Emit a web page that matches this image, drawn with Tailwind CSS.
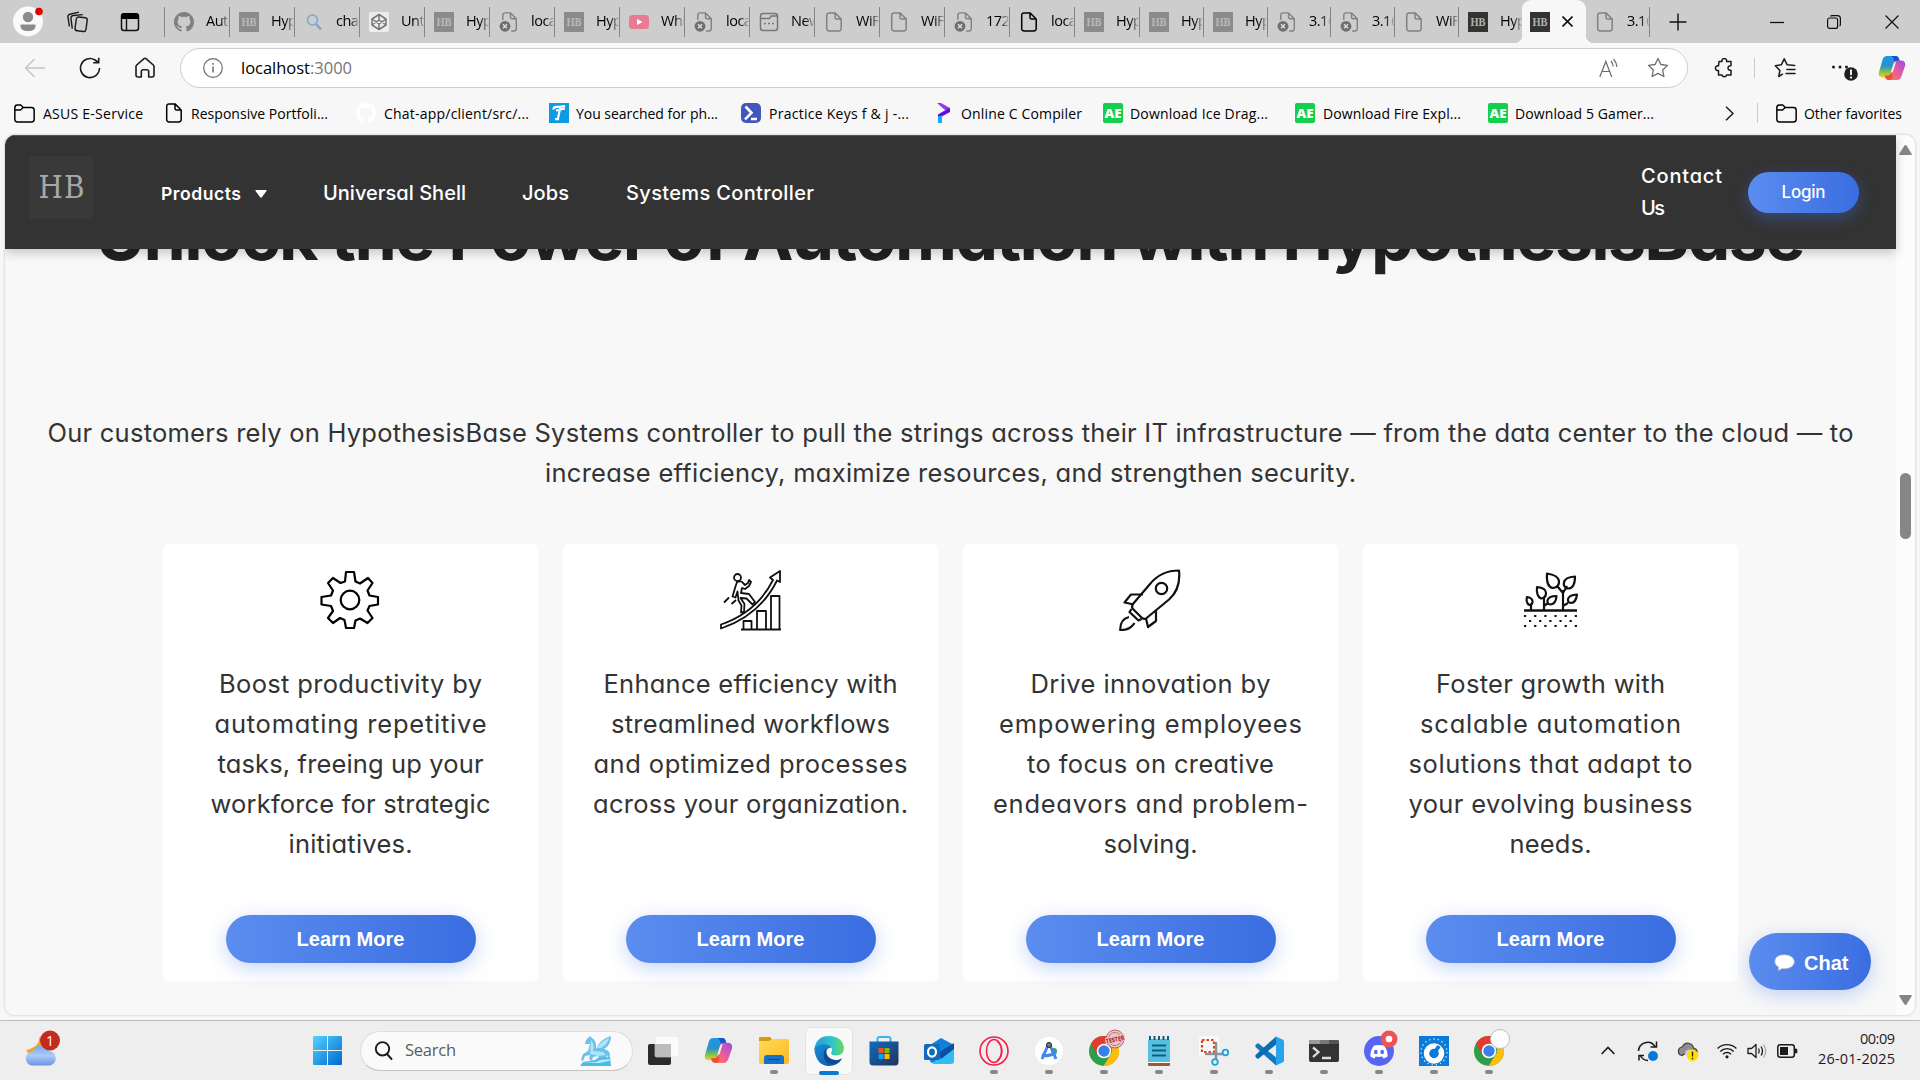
<!DOCTYPE html>
<html lang="en">
<head>
<meta charset="utf-8">
<title>HypothesisBase</title>
<script src="https://cdn.jsdelivr.net/npm/@tailwindcss/browser@4"></script>
</head>
<body class="w-[1920px] h-[1080px] overflow-hidden bg-[#f7f7f7] text-black font-['Open_Sans','Noto_Sans',sans-serif] flex flex-col">

<!-- Shared icon symbols -->
<svg class="absolute size-0">
  <defs>
    <linearGradient id="cpA" x1="0" y1="0" x2="0" y2="1"><stop offset="0" stop-color="#1a9be8"/><stop offset=".45" stop-color="#2b8fd0"/><stop offset=".7" stop-color="#6fbf5a"/><stop offset="1" stop-color="#f7d21e"/></linearGradient>
    <linearGradient id="cpB" x1="1" y1="0" x2="0" y2="1"><stop offset="0" stop-color="#9b4be8"/><stop offset=".5" stop-color="#ec5b9a"/><stop offset="1" stop-color="#fb8a4a"/></linearGradient>
    <linearGradient id="edA" x1="0" y1="0" x2="1" y2="0"><stop offset="0" stop-color="#1f9be0"/><stop offset=".6" stop-color="#33c4c8"/><stop offset="1" stop-color="#63dc58"/></linearGradient>
    <linearGradient id="edB" x1="0" y1="0" x2="1" y2="1"><stop offset="0" stop-color="#1e90dc"/><stop offset="1" stop-color="#0b4f9e"/></linearGradient>
    <linearGradient id="win" x1="0" y1="0" x2="1" y2="1"><stop offset="0" stop-color="#55d4fd"/><stop offset="1" stop-color="#0067cf"/></linearGradient>
    <linearGradient id="store" x1="0" y1="0" x2="1" y2="1"><stop offset="0" stop-color="#0f6cc0"/><stop offset="1" stop-color="#22335e"/></linearGradient>
    <linearGradient id="fold" x1="0" y1="0" x2="1" y2="1"><stop offset="0" stop-color="#ffdb5c"/><stop offset="1" stop-color="#fbb91f"/></linearGradient>
    <linearGradient id="cloud" x1="0" y1="0" x2="0" y2="1"><stop offset="0" stop-color="#7fa5ee"/><stop offset=".5" stop-color="#a9ccf8"/><stop offset="1" stop-color="#6f93e4"/></linearGradient>
  </defs>
  <symbol id="github" viewBox="0 0 16 16"><path fill="currentColor" d="M8 0C3.58 0 0 3.58 0 8c0 3.54 2.29 6.53 5.47 7.59.4.07.55-.17.55-.38 0-.19-.01-.82-.01-1.49-2.01.37-2.53-.49-2.69-.94-.09-.23-.48-.94-.82-1.13-.28-.15-.68-.52-.01-.53.63-.01 1.08.58 1.23.82.72 1.21 1.87.87 2.33.66.07-.52.28-.87.51-1.07-1.78-.2-3.64-.89-3.64-3.95 0-.87.31-1.59.82-2.15-.08-.2-.36-1.02.08-2.12 0 0 .67-.21 2.2.82.64-.18 1.32-.27 2-.27s1.36.09 2 .27c1.53-1.04 2.2-.82 2.2-.82.44 1.1.16 1.92.08 2.12.51.56.82 1.27.82 2.15 0 3.07-1.87 3.75-3.65 3.95.29.25.54.73.54 1.48 0 1.07-.01 1.93-.01 2.2 0 .21.15.46.55.38A8.01 8.01 0 0 0 16 8c0-4.42-3.58-8-8-8z"/></symbol>
  <symbol id="file" viewBox="0 0 20 20"><path fill="none" stroke="currentColor" stroke-width="1.5" stroke-linejoin="round" d="M5 .9h6L17.2 7v9.6a2.3 2.3 0 0 1-2.3 2.4H5a2.3 2.3 0 0 1-2.3-2.4V3.2A2.3 2.3 0 0 1 5 .9zM11 1v4.4A1.6 1.6 0 0 0 12.6 7h4.4"/></symbol>
  <symbol id="filex" viewBox="0 0 20 20"><path fill="none" stroke="#808080" stroke-width="1.4" stroke-linejoin="round" d="M3.8 8V3A2.1 2.1 0 0 1 6 .9h5.500L17.300 6.800v10a2.100 2.100 0 0 1-2.100 2.200h-3M11.500 1v4.300A1.500 1.500 0 0 0 13 6.800h4"/><circle cx="6" cy="14.300" r="5.400" fill="#6f6f6f"/><path d="M4 12.300l4 4m0-4l-4 4" stroke="#ddd" stroke-width="1.500"/></symbol>
  <symbol id="hb" viewBox="0 0 20 20"><rect width="20" height="20" fill="#8b8b8b"/><text x="10" y="14.200" text-anchor="middle" font-family="Liberation Serif" font-size="11.500" font-weight="700" fill="#b9b9b9" textLength="15" lengthAdjust="spacingAndGlyphs">HB</text></symbol>
  <symbol id="hbd" viewBox="0 0 20 20"><rect width="20" height="20" fill="#333"/><text x="10" y="14.200" text-anchor="middle" font-family="Liberation Serif" font-size="11.500" font-weight="700" fill="#b0b0b0" textLength="15" lengthAdjust="spacingAndGlyphs">HB</text></symbol>
  <symbol id="folder" viewBox="0 0 20 20"><path fill="none" stroke="currentColor" stroke-width="1.400" stroke-linejoin="round" d="M.8 4.500A2.500 2.500 0 0 1 3.300 2h3.200l2.300 2.300h7.900a2.500 2.500 0 0 1 2.500 2.500v8.700a2.500 2.500 0 0 1-2.500 2.500H3.300a2.500 2.500 0 0 1-2.500-2.500zM.8 6.600h5.400l2.600-2.300"/></symbol>
  <symbol id="ae" viewBox="0 0 20 20"><rect width="20" height="20" rx="2" fill="#13d04c"/><text x="10" y="14.600" text-anchor="middle" font-family="Open Sans" font-size="12.500" font-weight="800" fill="#fff" textLength="17" lengthAdjust="spacingAndGlyphs">AE</text></symbol>
  <symbol id="copilot" viewBox="0 0 28 28"><path fill="url(#cpA)" d="M9 2h8.500c2 0 3 1 3.500 3l.8 2.800h-2.600c-2 0-3 1-3.600 3L12.800 20c-.5 2-1.500 3.500-4 3.500H5C1.500 23.500.2 21 1 18L4.500 6C5.300 3.300 6.500 2 9 2z"/><path fill="#1755c8" d="M11.500 2h6c2 0 3 1 3.500 3l.8 2.800h-3c-3 0-2.800-2-3.800-4-.6-1.200-1.800-1.800-3.500-1.800z"/><path fill="url(#cpB)" d="M19 26h-8.500c-2 0-3-1-3.500-3l-.3-1.500h2.500c2 0 3-1 3.600-3l2.700-9.200C16 7.300 17 6.500 19.300 6.500H23c3.500 0 4.800 2.500 4 5.500L23.500 22c-.8 2.700-2 4-4.500 4z"/><path fill="#f04f36" d="M7 21.500h3c2 0 3-1 3.500-3l1 2c.6 2.500-.2 5.500-2.500 5.500-3.500 0-4.600-1.500-5-4.500z"/><path fill="#eee" d="M13.300 16.500l2-6.500c.4-1.400 1.200-2.200 2.700-2.200l-2.500 8.400c-.4 1.400-1.200 2.300-2.700 2.300z"/></symbol>
  <symbol id="chrome" viewBox="0 0 30 30"><circle cx="15" cy="15" r="15" fill="#2e9e48"/><path fill="#e33b2e" d="M2 7.500A15 15 0 0 1 28 7.500H15L8.500 19z"/><path fill="#fdbd0b" d="M28 7.500A15 15 0 0 1 14.500 30L21.500 18.800A7.500 7.500 0 0 0 20 8z"/><circle cx="15" cy="15" r="7.300" fill="#fff"/><circle cx="15" cy="15" r="5.700" fill="#3b7fe8"/></symbol>
</svg>

<!-- Tab strip -->
<div class="h-[43px] shrink-0 bg-[#cdcdcd] flex items-center text-[14.5px] leading-5">
  <div class="w-[164px] shrink-0 flex items-center">
    <svg class="ml-[13px] size-[31px]" viewBox="0 0 31 31"><circle cx="15" cy="15.500" r="15" fill="#fafafa"/><circle cx="15" cy="11" r="5.200" fill="#8b8b8b"/><path fill="#8b8b8b" d="M7.500 18.500h15v1.500a5.500 5 0 0 1-5.500 5h-4a5.500 5 0 0 1-5.500-5z"/><circle cx="26" cy="5.500" r="3.800" fill="#e30000"/></svg>
    <svg class="ml-[23px] size-[22px]" viewBox="0 0 23 23" fill="none" stroke="#1b1b1b" stroke-width="1.500" stroke-linejoin="round"><rect x="9" y="6.500" width="11.500" height="14.500" rx="2.500" transform="rotate(8 14 14)"/><path d="M5.500 18.500L4.200 8A2.700 2.700 0 0 1 6.700 4.700L16.500 3.800M2.500 16L1 6.500A2.600 2.600 0 0 1 3 3.400L12.500 1.200"/></svg>
    <svg class="ml-[31px] size-5" viewBox="0 0 20 20"><rect x="1.500" y="2" width="17" height="16.500" rx="2.500" fill="none" stroke="#111" stroke-width="1.500"/><path d="M1 7V4a3 3 0 0 1 3-3h12a3 3 0 0 1 3 3v3z"/><path d="M6.500 7v11" stroke="#111" stroke-width="1.400"/></svg>
  </div>
  <div id="tabs" class="flex items-center"></div>
  <svg class="ml-[19px] size-[18px]" viewBox="0 0 18 18" stroke="#111" stroke-width="1.400"><path d="M9 .5v17M.5 9h17"/></svg>
  <svg class="ml-[83px] w-[14px] h-3" viewBox="0 0 14 12" stroke="#111" stroke-width="1.300"><path d="M0 6.500h14"/></svg>
  <svg class="ml-[43px] size-[14px]" viewBox="0 0 14 14" fill="none" stroke="#111" stroke-width="1.200"><rect x=".6" y="3" width="10" height="10.400" rx="2"/><path d="M3.500 1.400Q4 .6 5 .6h5.500a2.900 2.900 0 0 1 2.900 2.900V9.500q0 1-.9 1.500"/></svg>
  <svg class="ml-[44px] size-[14px]" viewBox="0 0 14 14" stroke="#111" stroke-width="1.200"><path d="M.5.5l13 13m0-13l-13 13"/></svg>
</div>

<!-- Address row -->
<div class="h-[50px] shrink-0 flex items-center">
  <svg class="ml-[24px] size-[22px]" viewBox="0 0 22 22" fill="none" stroke="#c4c4c4" stroke-width="1.400"><path d="M21 11H1.500M10.500 2L1.500 11l9 9"/></svg>
  <svg class="ml-[33px] size-[22px]" viewBox="0 0 22 22" fill="none" stroke="#1b1b1b" stroke-width="1.600"><path d="M20.500 11A9.500 9.500 0 1 1 16 3l3.500 2.500M19.700.8v5h-5.500"/></svg>
  <svg class="ml-[33px] size-[22px]" viewBox="0 0 22 22" fill="none" stroke="#1b1b1b" stroke-width="1.600" stroke-linejoin="round"><path d="M2 9.500Q2 8.700 2.700 8L10 1.600q1-.8 2 0L19.300 8q.7.700.7 1.500V18a2 2 0 0 1-2 2h-3.300v-5.500a1.700 1.700 0 0 0-1.700-1.700h-4a1.700 1.700 0 0 0-1.700 1.700V20H4a2 2 0 0 1-2-2z"/></svg>
  <div class="ml-[24px] w-[1508px] h-10 rounded-full bg-white border border-[#cfcfcf] flex items-center">
    <svg class="ml-[22px] size-5" viewBox="0 0 20 20" fill="none" stroke="#6b6b6b" stroke-width="1.200"><circle cx="10" cy="10" r="9.300"/><path d="M10 8.500v6M10 5v1.700" stroke-width="1.500"/></svg>
    <span class="ml-[18px] text-[16.5px] text-[#767676] whitespace-nowrap" data-w="111"><span class="text-black">localhost</span>:3000</span>
    <svg class="ml-auto w-[20px] h-[20px]" viewBox="0 0 20 20" fill="none" stroke="#6b6b6b" stroke-width="1.200"><path d="M.8 19L6.800 3.500 12.800 19M2.900 13.500h7.800M12 3a9 9 0 0 1 2.200 5.500M14.500 1a13 13 0 0 1 3.500 8"/></svg>
    <svg class="ml-[28px] mr-[18px] size-[22px]" viewBox="0 0 22 22" fill="none" stroke="#6b6b6b" stroke-width="1.300" stroke-linejoin="round"><path d="M11 1.500l2.900 6 6.600.9-4.800 4.600 1.200 6.500L11 16.400l-5.900 3.100L6.300 13 1.500 8.400l6.600-.9z"/></svg>
  </div>
  <svg class="ml-[26px] size-5" viewBox="0 0 20 20" fill="none" stroke="#1b1b1b" stroke-width="1.500" stroke-linejoin="round"><path d="M5 3.500h3a2.400 2.400 0 1 1 4.600 0H17v4.300a2.300 2.300 0 1 0 0 4.400V17h-4.400a2.400 2.400 0 0 1-4.600 0H4.500v-4.500a2.400 2.400 0 1 1 0-4.600z"/></svg>
  <div class="ml-[20px] w-px h-5 bg-[#cbcbcb]"></div>
  <svg class="ml-[19px] size-[22px]" viewBox="0 0 22 22" fill="none" stroke="#1b1b1b" stroke-width="1.500" stroke-linejoin="round" stroke-linecap="round"><path d="M8.500 17.200L4.800 19.500 5.900 13.500 1.300 8.800l6-1 2.900-6 3 6 7.500.6M13 12.500h8M12 16.500h9"/></svg>
  <svg class="ml-[35px] w-[27px] h-[28px]" viewBox="0 0 27 28"><g fill="#1b1b1b"><circle cx="2.500" cy="13" r="1.500"/><circle cx="9" cy="13" r="1.500"/><circle cx="15.500" cy="13" r="1.500"/></g><circle cx="20" cy="20" r="6.800" fill="#1f1f1f"/><path d="M20 15.500v5.500M20 22.500v2" stroke="#fff" stroke-width="1.800"/></svg>
  <svg class="ml-[20px] size-[28px]"><use href="#copilot"/></svg>
</div>

<!-- Bookmarks bar -->
<div class="h-[42px] shrink-0 flex items-center text-[14px] whitespace-nowrap pb-0.5">
  <div class="ml-[14px] w-[150px] flex items-center gap-2"><svg class="size-[21px]"><use href="#folder"/></svg><span data-w="100">ASUS E-Service</span></div>
  <div class="w-[191px] flex items-center gap-[7px]"><svg class="size-5"><use href="#file"/></svg><span data-w="137">Responsive Portfoli...</span></div>
  <div class="w-[194px] flex items-center gap-2 pl-px"><svg class="size-5 text-white"><use href="#github"/></svg><span data-w="145">Chat-app/client/src/...</span></div>
  <div class="w-[191px] flex items-center gap-[7px]"><svg class="size-5" viewBox="0 0 20 20"><rect width="20" height="20" fill="#0c9be4"/><path d="M4 6.500Q5 3.500 8 3.800T16 3.200M11.500 4Q9.500 12 9 16M6 16.200h4M7 7.500l9-2" stroke="#fff" stroke-width="2.200" fill="none"/></svg><span data-w="142">You searched for ph...</span></div>
  <div class="w-[194px] flex items-center gap-2 pl-px"><svg class="size-5" viewBox="0 0 20 20"><rect width="20" height="20" rx="5" fill="#4355be"/><path d="M4.500 3.500l6 6.300-6.500 6.500M10 16h6" stroke="#fff" stroke-width="2.600" fill="none"/></svg><span data-w="140">Practice Keys f &amp; j -...</span></div>
  <div class="w-[169px] flex items-center gap-[7px]"><svg class="size-5" viewBox="0 0 20 20"><path fill="#8f3cf5" d="M3 0h4l9 5v4l-4-1z"/><path fill="#5b12d8" d="M16 5v4L4 15.500v-4l5-3z"/><path fill="#19a8ff" d="M4 13.500l4-1V20H4z"/></svg><span data-w="121">Online C Compiler</span></div>
  <div class="w-[192px] flex items-center gap-[7px]"><svg class="size-5"><use href="#ae"/></svg><span data-w="138">Download Ice Drag...</span></div>
  <div class="w-[193px] flex items-center gap-2"><svg class="size-5"><use href="#ae"/></svg><span data-w="138">Download Fire Expl...</span></div>
  <div class="w-[237px] flex items-center gap-[7px]"><svg class="size-5"><use href="#ae"/></svg><span data-w="139">Download 5 Gamer...</span></div>
  <svg class="w-[9px] h-[15px]" viewBox="0 0 9 15" fill="none" stroke="#1b1b1b" stroke-width="1.500"><path d="M1 .8l7 6.700-7 6.700"/></svg>
  <div class="ml-[23px] w-px h-5 bg-[#cbcbcb]"></div>
  <div class="ml-[18px] flex items-center gap-[7px]"><svg class="size-[21px]"><use href="#folder"/></svg><span data-w="98">Other favorites</span></div>
</div>

<!-- Page viewport -->
<div class="mx-[5px] h-[880px] shrink-0 flex rounded-[10px] overflow-hidden bg-[#fcfcfc] shadow-[0_0_2px_1px_#dcdcdc] relative">
  <div class="w-[1891px] bg-[#f8f8f8] flex flex-col font-[Inter,sans-serif] [font-feature-settings:'cv11'] [font-optical-sizing:none] [font-variation-settings:'opsz'_14]">
    <header class="h-[114px] shrink-0 bg-[#333] border-t border-[#555] shadow-[0_4px_10px_rgba(0,0,0,0.2)] z-10 flex items-center text-white text-[20px] font-medium whitespace-nowrap">
      <div class="ml-[25px] mt-[-10px] size-[63px] bg-[#393939] flex items-center justify-center font-['DejaVu_Serif_Condensed','DejaVu_Serif',serif] text-[31px] text-[#a8a8a8] font-normal"><span data-w="46">HB</span></div>
      <div class="ml-[68px] mt-[3px] flex items-center text-[17.6px] font-semibold"><span data-w="80">Products</span><svg class="ml-[14px] w-3 h-2" viewBox="0 0 12 8"><path fill="#fff" d="M1 0h10q1 0 .5 1L6.600 7.500q-.6.700-1.200 0L.500 1Q0 0 1 0z"/></svg></div>
      <span class="ml-[56px]" data-w="143">Universal Shell</span>
      <span class="ml-[56px]" data-w="47">Jobs</span>
      <span class="ml-[57px]" data-w="188">Systems Controller</span>
      <div class="ml-auto mr-[26px] mt-[-1px] leading-8 flex flex-col items-start"><span data-w="81">Contact</span><span data-w="24">Us</span></div>
      <button class="mr-[37px] w-[111px] h-[41px] rounded-full bg-linear-to-r from-[#5b8def] to-[#3a6de0] shadow-[0_5px_15px_rgba(59,111,224,0.4)] text-[17px] font-medium flex items-center justify-center"><span data-w="44">Login</span></button>
    </header>
    <h1 class="mt-[-59px] h-[90px] shrink-0 leading-[90px] text-[68px] font-bold text-[#222] flex justify-center whitespace-nowrap"><span data-w="1710">Unlock the Power of Automation with HypothesisBase</span></h1>
    <p class="mt-[133px] text-[25.5px] leading-10 text-[#333] flex flex-col items-center whitespace-nowrap"><span data-w="1806">Our customers rely on HypothesisBase Systems controller to pull the strings across their IT infrastructure — from the data center to the cloud — to</span><span data-w="811">increase efficiency, maximize resources, and strengthen security.</span></p>
    <div class="mt-[51px] flex justify-center gap-[25px] text-[25.5px] leading-10 text-[#333] whitespace-nowrap">
      <section class="w-[375px] h-[437px] rounded-[5px] bg-white pt-[25px] pb-[18px] flex flex-col items-center">
        <svg class="size-[62px] shrink-0 mr-0.5" viewBox="0 0 62 62" fill="none" stroke="#000" stroke-width="2.200" stroke-linejoin="round"><path d="M27 3h8l1.500 9.500 4.500 2L49 9l4.500 5-5 7.500 2 5L59 28v7.500L50.500 37l-2 4.500 5 7.500-5 5L41 49.500l-4.500 2L35 59h-8l-1.500-8-4.500-2L14 54l-5-5 5-7-2-5-9.500-1.500V28L12 26.500l2-5L9 14l5-5 7.500 5 4.500-1.500z"/><circle cx="31" cy="31" r="9.300"/></svg>
        <div class="mt-[33px] flex flex-col items-center"><span data-w="263">Boost productivity by</span><span data-w="272">automating repetitive</span><span data-w="266">tasks, freeing up your</span><span data-w="280">workforce for strategic</span><span data-w="124">initiatives.</span></div>
        <button class="mt-auto w-[250px] h-12 shrink-0 rounded-full bg-linear-to-r from-[#5b8def] to-[#3a6de0] shadow-[0_5px_20px_rgba(59,111,224,0.3)] text-white font-bold text-[20px] font-['Liberation_Sans',Arial,sans-serif]">Learn More</button>
      </section>
      <section class="w-[375px] h-[437px] rounded-[5px] bg-white pt-[25px] pb-[18px] flex flex-col items-center">
        <svg class="size-[62px] shrink-0" viewBox="0 0 62 62" fill="none" stroke="#111" stroke-width="1.800" stroke-linejoin="round"><path d="M1 55.500Q37 43 53 11l-3-2.500L60 2v11l-3-1.500Q40 46 1 59.500z"/><path d="M21 60.500h40M23.500 60v-8h8v8M37 60V42h9v18M51 60V27h8.500v33"/><circle cx="17.500" cy="8.500" r="3.500"/><path d="M17 13q5-1.500 6 1l2 2 3-2 1-3 2 2-2 4-4 3-3-1-1 5 8 1 6 8-2.500 2.500-6-6-6-.5 4 6-.5 8-3 .5.500-7-3-5-1-9-2 6-3-1 3-10z"/><path d="M4 33.500l5-5M11.500 35l4.500-4"/></svg>
        <div class="mt-[33px] flex flex-col items-center"><span data-w="294">Enhance efficiency with</span><span data-w="279">streamlined workflows</span><span data-w="314">and optimized processes</span><span data-w="315">across your organization.</span></div>
        <button class="mt-auto w-[250px] h-12 shrink-0 rounded-full bg-linear-to-r from-[#5b8def] to-[#3a6de0] shadow-[0_5px_20px_rgba(59,111,224,0.3)] text-white font-bold text-[20px] font-['Liberation_Sans',Arial,sans-serif]">Learn More</button>
      </section>
      <section class="w-[375px] h-[437px] rounded-[5px] bg-white pt-[25px] pb-[18px] flex flex-col items-center">
        <svg class="size-[62px] shrink-0 mr-0.5" viewBox="0 0 62 62" fill="none" stroke="#111" stroke-width="2.200" stroke-linejoin="round"><path d="M60 1.500Q62 20 50 30.500L27 49.500q-3 1-4.500-1L14 40q-1.500-2-.5-4.500L31 15Q42 1.500 60 1.500z"/><circle cx="42.500" cy="19.500" r="5.700"/><path d="M24 25.500H12L5.500 33.500l9.500 2M37 41v11l-8 6-2-8.500M12.500 40l-2 3 9 8.500 3-1.500M10 48Q1 50 1.200 61 11 61.500 15.500 54"/></svg>
        <div class="mt-[33px] flex flex-col items-center"><span data-w="240">Drive innovation by</span><span data-w="303">empowering employees</span><span data-w="247">to focus on creative</span><span data-w="315">endeavors and problem-</span><span data-w="94">solving.</span></div>
        <button class="mt-auto w-[250px] h-12 shrink-0 rounded-full bg-linear-to-r from-[#5b8def] to-[#3a6de0] shadow-[0_5px_20px_rgba(59,111,224,0.3)] text-white font-bold text-[20px] font-['Liberation_Sans',Arial,sans-serif]">Learn More</button>
      </section>
      <section class="w-[375px] h-[437px] rounded-[5px] bg-white pt-[25px] pb-[18px] flex flex-col items-center">
        <svg class="size-[62px] shrink-0 mr-0.5" viewBox="0 0 62 62" fill="none" stroke="#111" stroke-width="2.200" stroke-linejoin="round"><path d="M5 41.500h53" stroke-width="2.400"/><path d="M44 41V21M44 24l-5-6M44 24l4-7M44 37l5-3M25 41V28M25 37l4-3M12 41v-6M28 4.500Q39 6 40 12q.5 6-6 7Q27 18 28 4.500zM56 7.500q0 12-7 12-5-1-4-6Q46 8 56 7.500zM58 25.500q-1 8-6 8.500-3.500-.5-3-4 1-4 9-4.500zM18 18q9 1 9 6 0 5-5 5.500Q17 27 18 18zM37.500 27q-.5 8-6 8.500-3.500-.5-3-4 1-4.500 9-4.500zM8 28q6 1 5.500 5-.5 3-3 3Q6.500 34 8 28z"/><path d="M5 47h53M5 57h53" stroke-width="2.200" stroke-dasharray="2.200 7.950"/><path d="M10 52h45" stroke-width="2.200" stroke-dasharray="2.200 7.950"/></svg>
        <div class="mt-[33px] flex flex-col items-center"><span data-w="229">Foster growth with</span><span data-w="261">scalable automation</span><span data-w="284">solutions that adapt to</span><span data-w="284">your evolving business</span><span data-w="82">needs.</span></div>
        <button class="mt-auto w-[250px] h-12 shrink-0 rounded-full bg-linear-to-r from-[#5b8def] to-[#3a6de0] shadow-[0_5px_20px_rgba(59,111,224,0.3)] text-white font-bold text-[20px] font-['Liberation_Sans',Arial,sans-serif]">Learn More</button>
      </section>
    </div>
  </div>
  <!-- Scrollbar -->
  <div class="w-[19px] flex flex-col items-center py-[10px] bg-[#fcfcfc]">
    <svg class="w-[13px] h-[10px]" viewBox="0 0 13 10"><path fill="#858585" d="M6.500 0q.7 0 1.200.8L12.800 9q.3 1-.8 1H1Q0 10 .2 9L5.300.8Q5.800 0 6.500 0z"/></svg>
    <div class="mt-[318px] w-[11px] h-[66px] rounded-full bg-[#868686]"></div>
    <svg class="mt-auto w-[13px] h-[10px]" viewBox="0 0 13 10"><path fill="#858585" d="M6.500 10q-.7 0-1.200-.8L.2 1Q0 0 1 0h11q1 0 .8 1L7.700 9.200q-.5.800-1.200.8z"/></svg>
  </div>
  <!-- Floating chat button -->
  <button class="absolute right-[44px] bottom-[25px] w-[122px] h-[57px] rounded-full bg-linear-to-r from-[#5b8def] to-[#3a6de0] shadow-[0_5px_20px_rgba(59,111,224,0.3)] text-white font-bold text-[20px] font-['Liberation_Sans',Arial,sans-serif] flex items-center pl-[25px] gap-[9px] pt-0.5"><svg class="w-[21px] h-[17px]" viewBox="0 0 21 17"><path fill="#fff" stroke="#b9b9b9" stroke-width=".8" d="M10.500.8C16 .8 20.300 3.800 20.300 7.800s-4.300 6.900-9.800 6.900q-1.200 0-2.300-.2L4.300 16.500l.3-3.400Q.8 11 .8 7.800.8.800 10.500.8z"/></svg>Chat</button>
</div>

<!-- Taskbar -->
<div class="mt-[5px] h-[60px] shrink-0 bg-[#eeeeee] border-t border-[#bcbcbc] flex items-center">
  <svg class="ml-[25px] w-[36px] h-[38px] mt-[-6px]" viewBox="0 0 36 38"><path fill="#f2a51f" d="M14 8q1 10-13 13 4 8 14 6l6-12z"/><path fill="url(#cloud)" d="M8 36.500a7 7 0 0 1-.5-14 9 9 0 0 1 16.500-.5 7.300 7.300 0 0 1 .5 14.500z"/><circle cx="25" cy="11.500" r="10" fill="#c42b1c"/><text x="25" y="16.500" text-anchor="middle" font-size="14" fill="#fff">1</text></svg>
  <svg class="ml-[252px] size-[29px]" viewBox="0 0 29 29"><path fill="url(#win)" d="M1 0h13v14H0V1q0-1 1-1zM15 0h13q1 0 1 1v13H15zM0 15h14v14H1q-1 0-1-1zM15 15h14v13q0 1-1 1H15z"/></svg>
  <div class="ml-[18px] w-[273px] h-10 rounded-full bg-[#fafafa] border border-[#dedede] border-b-[#c4c4c4] flex items-center">
    <svg class="ml-[13px] size-[19px]" viewBox="0 0 19 19" fill="none" stroke="#1b1b1b" stroke-width="1.900" stroke-linecap="round"><circle cx="8.500" cy="7.800" r="6.700"/><path d="M13 13l4.500 5"/></svg>
    <span class="ml-[12px] text-[16.500px] text-[#5c5c5c]" data-w="51">Search</span>
    <svg class="ml-auto mr-[20px] w-[32px] h-[32px]" viewBox="0 0 32 32"><path fill="#6fc0e8" d="M16 14Q20 4 31 1q0 9-7 13 5 1 6 5l-1 5-2-4-2 6h-5l-2-5-5 1-1 4-3-2 1-4-5 1-2 5-2-1 2-6 5-3Q9 13 10 9L5 9 6 5 10 1l2 2q5 3 4 11z"/><path fill="#a8e6fa" d="M17 13Q21 6 29 3q-1 6-8 10zM11 5q4 4 2 11l10 1 3 3-8 1-8-2z"/><path fill="#48bce6" d="M0 31l3-4 12-2 3-2 12-1 1 9z"/><path fill="#b4effc" d="M3 28l13-1 4-2 10-1-1 2-10 2z"/></svg>
  </div>
  <div class="ml-[3px] flex items-center h-full">
    <div class="w-[55px] flex justify-center"><svg class="w-[31px] h-[30px]" viewBox="0 0 31 30"><rect x="0" y="8" width="23" height="21" rx="2" fill="#2b2b2b"/><rect x="7" y="0" width="24" height="21" rx="2" fill="#fbfbfb" stroke="#ddd" stroke-width=".6"/><rect x="7" y="8" width="16" height="13" fill="#bcbcbc"/></svg></div>
    <div class="w-[55px] flex justify-center"><svg class="size-[29px]"><use href="#copilot"/></svg></div>
    <div class="w-[55px] h-full relative flex items-center justify-center"><svg class="size-[30px]" viewBox="0 0 30 30"><path fill="#d99a09" d="M1 1h10l3 3h13v8H0V2q0-1 1-1z"/><path fill="url(#fold)" d="M0 5h10l3-2h15q2 0 2 2v21q0 2-2 2H2q-2 0-2-2z"/><path fill="#1473c8" d="M5 28v-6q0-3 3-3h14q3 0 3 3v6z"/><path stroke="#0a4f95" stroke-width="1.200" d="M9.500 23.500h11"/></svg><i class="absolute bottom-[6px] w-2 h-1 rounded-full bg-[#868686]"></i></div>
    <div class="w-[55px] h-full relative flex items-center justify-center"><div class="size-12 rounded-md bg-[#f9f9f9] border border-[#e4e4e4] flex items-center justify-center"><svg class="size-[30px]" viewBox="0 0 30 30"><path fill="url(#edB)" d="M.3 13Q2 7 9 6.500q7 .5 8.500 5-5.500 0-5 6 1 6.500 9 7 4 0 7-2.500Q24 30 15 30 2 29.500.3 13z"/><path fill="url(#edA)" d="M.5 12.500Q2.500 0 15 0q14 .5 15 12.500-.5 7-8.500 7-5 0-4.300-3 2-3-.7-6Q8 5 .5 12.500z"/><path fill="#0f4b8e" d="M12 12q-6 9 2 15.500 8 2 13.500-4.500-8 3-13-2-3.500-4-2.500-9z"/></svg></div><i class="absolute bottom-[5px] w-5 h-1 rounded-full bg-[#0a78d4]"></i></div>
    <div class="w-[55px] flex justify-center"><svg class="size-[30px]" viewBox="0 0 30 30"><path fill="none" stroke="#34b5f0" stroke-width="2" d="M8.500 6V3q0-2 2-2h9q2 0 2 2v3"/><path fill="url(#store)" d="M.5 5.500h29V26q0 3.500-3.500 3.500H4Q.5 29.500.5 26z"/><path fill="#f25022" d="M9.500 12h5v5h-5z"/><path fill="#7fba00" d="M15.500 12h5v5h-5z"/><path fill="#00a4ef" d="M9.500 18h5v5h-5z"/><path fill="#ffb900" d="M15.500 18h5v5h-5z"/></svg></div>
    <div class="w-[55px] flex justify-center"><svg class="size-[30px]" viewBox="0 0 30 30"><path fill="#1280d8" d="M6 9L17 2l13 7v15q0 3-3 3H9q-3 0-3-3z"/><path fill="#31bdf3" d="M8 27l22-15v13q0 3-3 3H10z"/><path fill="#0c4ea3" d="M14 17L30 7v6L17 23z"/><rect y="8" width="16" height="16" rx="1.500" fill="#0f6cbd"/><ellipse cx="8" cy="16" rx="4" ry="4.600" fill="none" stroke="#fff" stroke-width="2.200"/></svg></div>
    <div class="w-[55px] h-full relative flex items-center justify-center"><svg class="size-[30px]" viewBox="0 0 30 30" fill="none" stroke="#fa1e4e"><circle cx="15" cy="15" r="14" stroke-width="1.600"/><ellipse cx="15" cy="15" rx="7.500" ry="11.500" stroke-width="1.600"/><path d="M18 5.500q5 3 5 9.500t-5 9.500" stroke-width="1.300"/></svg><i class="absolute bottom-[6px] w-2 h-1 rounded-full bg-[#868686]"></i></div>
    <div class="w-[55px] h-full relative flex items-center justify-center"><svg class="size-[30px]" viewBox="0 0 30 30"><circle cx="15" cy="15" r="14" fill="#fff"/><circle cx="20" cy="15" r="3" fill="#34a853"/><path d="M15 7L8 23M15 7l7 16M8 18.500q7 3 14-2" stroke="#4285f4" stroke-width="3" fill="none"/><circle cx="15" cy="9" r="2.500" fill="#777" stroke="#222"/></svg><i class="absolute bottom-[6px] w-2 h-1 rounded-full bg-[#868686]"></i></div>
    <div class="w-[55px] h-full relative flex items-center justify-center"><svg class="size-[30px]"><use href="#chrome"/></svg><svg class="absolute top-[8px] left-[29px] size-5" viewBox="0 0 20 20"><circle cx="10" cy="10" r="9" fill="#e6c8c8" stroke="#c25a62"/><circle cx="10" cy="10" r="6.500" fill="none" stroke="#c25a62" stroke-width=".8"/><g transform="rotate(-12 10 10)"><rect x="0" y="7" width="20" height="6.500" fill="#e6c8c8"/><text x="10" y="12.800" text-anchor="middle" font-size="6.500" font-weight="800" fill="#b8323c" textLength="19" lengthAdjust="spacingAndGlyphs">TESTER</text></g></svg><i class="absolute bottom-[6px] w-2 h-1 rounded-full bg-[#868686]"></i></div>
    <div class="w-[55px] h-full relative flex items-center justify-center"><svg class="w-[22px] h-[30px]" viewBox="0 0 22 30"><rect y="3" width="22" height="25" rx="2" fill="#56bfe0"/><path fill="#9a5a24" d="M0 27h22v1.500q0 1.500-1.500 1.500h-19Q0 30 0 28.500z"/><path fill="#fff" d="M0 26h22v1H0z"/><path stroke="#0d5f80" stroke-width="2" d="M4 9.500h14M4 14.500h14M4 19.500h14"/><path stroke="#0d5f80" stroke-width="2" d="M2 0v4M6.500 0v4M11 0v4M15.500 0v4M20 0v4"/></svg><i class="absolute bottom-[6px] w-2 h-1 rounded-full bg-[#868686]"></i></div>
    <div class="w-[55px] h-full relative flex items-center justify-center"><svg class="size-[30px]" viewBox="0 0 30 30"><rect x="0" y="0" width="20" height="20" fill="#f8f8f8"/><rect x="3" y="4" width="12" height="12" fill="none" stroke="#e0401a" stroke-width="2.200" stroke-dasharray="2.500 2"/><path d="M17 6v17M6 18h18" stroke="#8c9297" stroke-width="2.500"/><circle cx="16" cy="26" r="2.800" fill="none" stroke="#1d9fe0" stroke-width="1.800"/><circle cx="26.500" cy="16.500" r="2.800" fill="none" stroke="#1d9fe0" stroke-width="1.800"/></svg><i class="absolute bottom-[6px] w-2 h-1 rounded-full bg-[#868686]"></i></div>
    <div class="w-[55px] h-full relative flex items-center justify-center"><svg class="size-[30px]" viewBox="0 0 30 30"><path fill="#1279be" d="M2 8.500L4 7l20 16-2 6.500L1.500 11q-.5-1.500.5-2.500z"/><path fill="#0d6cb0" d="M2 21.500L4 23 24 7l-2-6.500L1.500 19q-.5 1.500.5 2.500z"/><path fill="#26a5ee" d="M22 .5l6.500 3Q30 4 30 5.500v19q0 1.500-1.500 2l-6.500 3z"/></svg><i class="absolute bottom-[6px] w-2 h-1 rounded-full bg-[#868686]"></i></div>
    <div class="w-[55px] h-full relative flex items-center justify-center"><svg class="size-[30px]" viewBox="0 0 30 30"><rect y="4" width="30" height="22" rx="2" fill="#333"/><path fill="#9a9a9a" d="M2 4h9v4H0V6q0-2 2-2z"/><path fill="#777" d="M11 4h9v4h-9z"/><path fill="#555" d="M20 4h8q2 0 2 2v2H20z"/><path d="M4 11.500l5.500 4.500L4 21M13 22h9" stroke="#ddd" stroke-width="2.300" fill="none"/></svg><i class="absolute bottom-[6px] w-2 h-1 rounded-full bg-[#868686]"></i></div>
    <div class="w-[55px] h-full relative flex items-center justify-center"><svg class="size-[30px]" viewBox="0 0 30 30"><circle cx="15" cy="15" r="15" fill="#5865f2"/><path fill="#fff" d="M10 9.500q5-1 10 0 4 5 3.500 11-2 1.500-4 2l-1.200-2q-3.300.8-6.600 0l-1.200 2q-2-.5-4-2Q6 14.500 10 9.500z"/><ellipse cx="11.800" cy="16" rx="1.800" ry="2.200" fill="#5865f2"/><ellipse cx="18.200" cy="16" rx="1.800" ry="2.200" fill="#5865f2"/></svg><svg class="absolute top-[9px] left-[29px] size-[18px]" viewBox="0 0 18 18"><circle cx="9" cy="9" r="8.500" fill="#ed5458"/><circle cx="9" cy="9" r="3.300" fill="#fff"/></svg><i class="absolute bottom-[6px] w-2 h-1 rounded-full bg-[#868686]"></i></div>
    <div class="w-[55px] h-full relative flex items-center justify-center"><svg class="size-[30px]" viewBox="0 0 30 30"><rect width="30" height="30" fill="#0b7ad8"/><circle cx="15" cy="16" r="13" fill="none" stroke="#d8ebff" stroke-width="1.300" stroke-dasharray="1.300 3"/><circle cx="15" cy="17.500" r="7.500" fill="none" stroke="#fff" stroke-width="5.500"/><path d="M20 10l-5 7.500" stroke="#0b7ad8" stroke-width="4"/><circle cx="15" cy="17.500" r="4.300" fill="#0b7ad8"/></svg><i class="absolute bottom-[6px] w-2 h-1 rounded-full bg-[#868686]"></i></div>
    <div class="w-[55px] h-full relative flex items-center justify-center"><svg class="size-[30px]"><use href="#chrome"/></svg><i class="absolute top-[8px] left-[29px] size-5 rounded-full bg-white border border-[#bdbdbd]"></i><i class="absolute bottom-[6px] w-2 h-1 rounded-full bg-[#868686]"></i></div>
  </div>
  <div class="ml-auto flex items-center">
    <svg class="w-[14px] h-[9px]" viewBox="0 0 14 9" fill="none" stroke="#1b1b1b" stroke-width="1.600"><path d="M.6 8L7 1.400 13.400 8"/></svg>
    <svg class="ml-[22px] size-[22px]" viewBox="0 0 22 22" fill="none" stroke="#1b1b1b" stroke-width="1.500"><path d="M1.500 11A9 9 0 0 1 18 6.500M19.500 1.500v5.500h-6M11 20.500A9 9 0 0 1 3.500 16M2 20.500V15.500h5"/><circle cx="16" cy="16" r="5" fill="#0a78d4" stroke="none"/></svg>
    <svg class="ml-[18px] size-[22px]" viewBox="0 0 22 22"><path fill="#8f8f8f" stroke="#3d3d3d" stroke-width="1.200" d="M5 15.500a4.300 4.300 0 0 1 .2-8.500Q8 2 12.500 3.500 16 4.500 16.500 8q4 1 3.500 4l-8-1z"/><path fill="#cfcfcf" d="M8 15.500q-1-5 4-6 3-.5 6 2l-4 4z"/><circle cx="15.500" cy="15.500" r="5.700" fill="#ffe000"/><path d="M15.500 11.800v4.700M15.500 17.700v1.500" stroke="#222" stroke-width="1.400"/></svg>
    <svg class="ml-[18px] size-[20px]" viewBox="0 0 20 20" fill="none" stroke="#1b1b1b" stroke-width="1.400"><path d="M.6 7.500a13.300 13.300 0 0 1 18.800 0M3.300 10.400a9.500 9.500 0 0 1 13.400 0M6 13.200a5.600 5.600 0 0 1 8 0"/><circle cx="10" cy="15.800" r="1.600" fill="#1b1b1b" stroke="none"/></svg>
    <svg class="ml-[10px] size-[20px]" viewBox="0 0 20 20" fill="none" stroke="#1b1b1b" stroke-width="1.300" stroke-linejoin="round"><path d="M1 7.500h3.500L9 3.500v13L4.500 12.500H1z"/><path d="M11.500 7.500q1.600 2.500 0 5M14 5.500q3 4.500 0 9"/><path d="M16.500 3.500q4.500 6.500 0 13" stroke="#a8a8a8"/></svg>
    <svg class="ml-[10px] w-[21px] h-[14px]" viewBox="0 0 21 14"><rect x=".8" y=".8" width="16.500" height="12.400" rx="2.500" fill="none" stroke="#1b1b1b" stroke-width="1.500"/><rect x="3" y="3" width="8" height="8" fill="#1b1b1b"/><path fill="#1b1b1b" d="M18 4.500l2.300.5v4l-2.300.5z"/></svg>
    <div class="ml-[20px] mr-[25px] mb-[3px] text-[14.500px] leading-5 text-[#1b1b1b] flex flex-col items-end"><span data-w="35">00:09</span><span data-w="77">26-01-2025</span></div>
  </div>
</div>

<script>
  // Tabs: [icon, label, width]
  const dim = 'size-5 shrink-0 text-[#808080]';
  const tabs = [
    ['github','Auto',66],['hb','Hypo',65],['search','chat',65],['codepen','Unti',65],['hb','Hypo',65],
    ['filex','local',65],['hb','Hypo',65],['yt','Whic',65],['filex','local',65],['newtab','New',65],
    ['file','WiFi',65],['file','WiFi',65],['filex','172.',65],['filedark','local',65],['hb','Hypo',65],
    ['hb','Hypo',64],['hb','Hypo',64],['filex','3.16',63],['filex','3.16',64],['file','WiFi',64],
    ['hbd','Hypo',63],['active','',64],['file','3.16',64]
  ];
  const art = {
    search: '<circle cx="8.500" cy="8" r="5"/><path d="M12 12l5 5.500" stroke-width="2.600"/>',
    codepen: '<rect width="20" height="20" rx="2" fill="#ededed" stroke="none"/><path d="M10 2.500l7 4.500v6l-7 4.500L3 13V7zM3 7l7 5 7-5M3 13l7-5 7 5M10 2.500V8M10 12v5.500"/>',
    yt: '<rect y="3" width="20" height="14" rx="3.500" fill="#e77c90" stroke="none"/><path fill="#fff" stroke="none" d="M8 7l5.500 3L8 13z"/>',
    newtab: '<rect x="1.500" y="1.500" width="17" height="17" rx="2.500"/><path d="M1.500 6.500h9L12 4h6M5 11.500h2M9 11.500h2M13 11.500h2"/>'
  };
  const icon = n => {
    if (n === 'filedark') return '<svg class="size-5 shrink-0 text-black"><use href="#file"/></svg>';
    if (art[n]) return `<svg class="size-5 shrink-0" viewBox="0 0 20 20" fill="none" stroke="${n === 'search' ? '#7aa6d6' : '#777'}" stroke-width="1.500" stroke-linejoin="round">${art[n]}</svg>`;
    return `<svg class="${dim}"><use href="#${n}"/></svg>`;
  };
  document.getElementById('tabs').innerHTML = tabs.map(([n, t, w], i) => n === 'active'
    ? `<div class="h-[43px] bg-[#f7f7f7] rounded-t-[9px] flex items-center pl-2 gap-3 relative" style="width:${w}px"><svg class="size-5"><use href="#hbd"/></svg><svg class="size-[11px]" viewBox="0 0 11 11" stroke="#111" stroke-width="1.600"><path d="M.5.5l10 10m0-10l-10 10"/></svg><i class="absolute right-full bottom-0 size-2 bg-[radial-gradient(circle_at_0_0,transparent_8px,#f7f7f7_8.5px)]"></i><i class="absolute left-full bottom-0 size-2 bg-[radial-gradient(circle_at_100%_0,transparent_8px,#f7f7f7_8.5px)]"></i></div>`
    : `<div class="h-[30px] flex items-center pl-[9px] ${i === 20 ? '' : 'border-r border-[#858585]'} ${i === 0 ? 'border-l' : ''}" style="width:${w}px">${icon(n)}<span class="ml-3 w-[23px] pb-0.5 overflow-hidden whitespace-nowrap tracking-[-0.5px] [mask-image:linear-gradient(to_right,#000_60%,transparent_105%)]">${t}</span></div>`
  ).join('');

  // Justify single-line labels to their design widths through letter spacing
  document.fonts.ready.then(() => document.querySelectorAll('[data-w]').forEach(el => {
    const n = el.textContent.length;
    const gap = (el.dataset.w - el.getBoundingClientRect().width) / (n - 1);
    el.style.letterSpacing = gap + 'px';
    el.style.marginRight = -gap + 'px';
  }));
</script>
</body>
</html>
